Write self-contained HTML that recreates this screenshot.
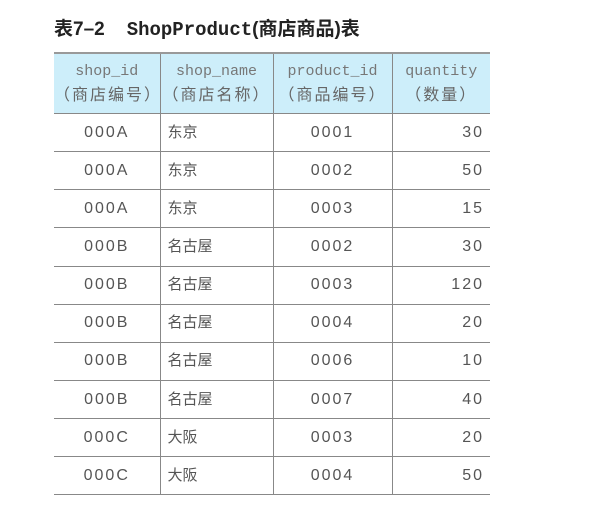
<!DOCTYPE html>
<html><head><meta charset="utf-8"><style>
body{margin:0;width:607px;height:517px;background:#fff;position:relative;overflow:hidden;font-family:"Liberation Sans","Noto Sans CJK SC",sans-serif;}
.t{position:absolute;left:54px;top:14px;font-size:19px;font-weight:bold;color:#222;white-space:nowrap}
.t .m{font-family:"Liberation Mono",monospace;font-weight:bold;margin-left:22px}
table{position:absolute;left:54px;top:52px;width:436px;border-collapse:collapse;color:#555;table-layout:fixed}
th{background:#cdeefa;font-weight:normal;height:59px;padding:0;font-size:15px;line-height:24px;border-left:1px solid #888;border-top:2px solid #999;border-bottom:1px solid #888;color:#666}
th .m{font-family:"Liberation Mono",monospace;font-size:15px;color:#777}
th .z{letter-spacing:2px;font-size:16px}
td{height:37.15px;padding:0;border-left:1px solid #888;border-bottom:1px solid #888;font-size:16px;letter-spacing:2px;line-height:20px;vertical-align:middle;color:#555}
th:first-child,td:first-child{border-left:none}
.c{text-align:center}.l{padding-left:7px;letter-spacing:0;font-size:15px}.r{text-align:right;padding-right:6px}
</style></head><body>
<div class="t">表7–2<span class="m">ShopProduct</span>(商店商品)表</div>
<table>
<colgroup><col style="width:106px"><col style="width:113px"><col style="width:119px"><col style="width:98px"></colgroup>
<tr><th><span class="m">shop_id</span><br><span class="z">（商店编号）</span></th><th><span class="m">shop_name</span><br><span class="z">（商店名称）</span></th><th><span class="m">product_id</span><br><span class="z">（商品编号）</span></th><th><span class="m">quantity</span><br><span class="z">（数量）</span></th></tr>
<tr><td class="c">000A</td><td class="l">东京</td><td class="c">0001</td><td class="r">30</td></tr>
<tr><td class="c">000A</td><td class="l">东京</td><td class="c">0002</td><td class="r">50</td></tr>
<tr><td class="c">000A</td><td class="l">东京</td><td class="c">0003</td><td class="r">15</td></tr>
<tr><td class="c">000B</td><td class="l">名古屋</td><td class="c">0002</td><td class="r">30</td></tr>
<tr><td class="c">000B</td><td class="l">名古屋</td><td class="c">0003</td><td class="r">120</td></tr>
<tr><td class="c">000B</td><td class="l">名古屋</td><td class="c">0004</td><td class="r">20</td></tr>
<tr><td class="c">000B</td><td class="l">名古屋</td><td class="c">0006</td><td class="r">10</td></tr>
<tr><td class="c">000B</td><td class="l">名古屋</td><td class="c">0007</td><td class="r">40</td></tr>
<tr><td class="c">000C</td><td class="l">大阪</td><td class="c">0003</td><td class="r">20</td></tr>
<tr><td class="c">000C</td><td class="l">大阪</td><td class="c">0004</td><td class="r">50</td></tr>
</table>
</body></html>
